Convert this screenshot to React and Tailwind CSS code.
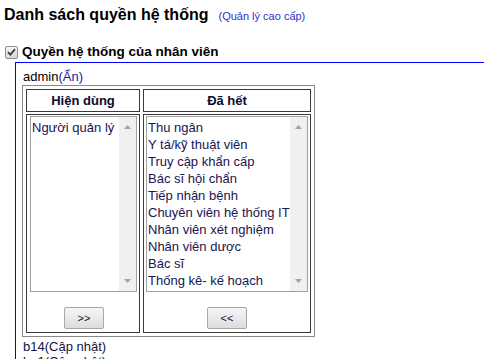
import React from "react";

const left = ["Người quản lý"];
const right = [
  "Thu ngân",
  "Y tá/kỹ thuật viên",
  "Truy cập khẩn cấp",
  "Bác sĩ hội chẩn",
  "Tiếp nhận bệnh",
  "Chuyên viên hệ thống IT",
  "Nhân viên xét nghiệm",
  "Nhân viên dược",
  "Bác sĩ",
  "Thống kê- kế hoạch",
];

function ListBox({ items, width }) {
  return (
    <div
      className={`flex h-[176px] border border-[#a0a0a0] bg-white ${width}`}
    >
      <div className="flex-1 overflow-hidden pt-[2px] pl-[1px]">
        {items.map((t) => (
          <div
            key={t}
            className="h-[17px] leading-[17px] text-[13px] text-[#1a1450] whitespace-nowrap"
          >
            {t}
          </div>
        ))}
      </div>
      <div className="w-[17px] bg-[#f0f0f0] flex flex-col justify-between items-center py-[8px]">
        <svg width="7" height="4" viewBox="0 0 7 4">
          <path d="M0 4 L3.5 0 L7 4 Z" fill="#a3a3a3" />
        </svg>
        <svg width="7" height="4" viewBox="0 0 7 4">
          <path d="M0 0 L3.5 4 L7 0 Z" fill="#a3a3a3" />
        </svg>
      </div>
    </div>
  );
}

function Btn({ children }) {
  return (
    <div className="w-[40px] h-[22px] rounded-[2px] border border-[#a8a8a8] bg-gradient-to-b from-[#f6f6f6] to-[#dddddd] flex items-center justify-center text-[11px] text-[#101040] leading-none">
      {children}
    </div>
  );
}

export default function App() {
  return (
    <div className="w-[484px] h-[359px] overflow-hidden bg-white font-['Liberation_Sans',Arial,sans-serif] text-black">
      <div className="flex items-baseline pl-[4px] pt-[4px] h-[28px]">
        <span className="text-[16px] font-bold leading-[22px]">
          Danh sách quyền hệ thống
        </span>
        <span className="ml-[10px] text-[11px] text-[#3030c8]">
          (Quản lý cao cấp)
        </span>
      </div>
      <div className="flex items-center h-[20px] mt-[14px] pl-[5px]">
        <div className="w-[13px] h-[13px] border border-[#8f8f8f] rounded-[2px] bg-gradient-to-b from-[#f4f4f4] to-[#d8d8d8] flex items-center justify-center">
          <svg width="9" height="8" viewBox="0 0 9 8">
            <path
              d="M1 4.2 L3.4 6.6 L8 1.2"
              fill="none"
              stroke="#3a3a3a"
              strokeWidth="1.8"
            />
          </svg>
        </div>
        <span className="ml-[4px] text-[13.5px] font-bold leading-[18px]">
          Quyền hệ thống của nhân viên
        </span>
      </div>
      <div className="ml-[15px] border-l border-t border-[#0000ff] pl-[6px] pt-[6px] h-[400px]">
        <div className="text-[13px] leading-[16px] ml-[1px]">
          admin<span className="text-[#2020a0]">(Ẩn)</span>
        </div>
        <div className="w-[293px] border border-[#888888] p-[3px] flex flex-col gap-[2px]">
          <div className="flex gap-[3px]">
            <div className="w-[114px] h-[23px] border border-[#3a3a3a] flex items-center justify-center text-[13px] font-bold text-[#0a0a30]">
              Hiện dùng
            </div>
            <div className="w-[168px] h-[23px] border border-[#3a3a3a] flex items-center justify-center text-[13px] font-bold text-[#0a0a30]">
              Đã hết
            </div>
          </div>
          <div className="flex gap-[3px]">
            <div className="w-[114px] h-[219px] border border-[#3a3a3a] pl-[3px] pt-[1px] flex flex-col">
              <ListBox items={left} width="w-[107px]" />
              <div className="flex justify-center mt-[15px] pr-[1px]">
                <Btn>&gt;&gt;</Btn>
              </div>
            </div>
            <div className="w-[168px] h-[219px] border border-[#3a3a3a] pl-[2px] pt-[1px] flex flex-col">
              <ListBox items={right} width="w-[162px]" />
              <div className="flex justify-center mt-[15px] pr-[2px]">
                <Btn>&lt;&lt;</Btn>
              </div>
            </div>
          </div>
        </div>
        <div className="text-[13px] leading-[15px] mt-[2px] ml-[1px] text-[#14143c]">
          b14(Cập nhật)
        </div>
        <div className="text-[13px] leading-[15px] ml-[1px] text-[#14143c]">
          ba1(Cập nhật)
        </div>
      </div>
    </div>
  );
}
